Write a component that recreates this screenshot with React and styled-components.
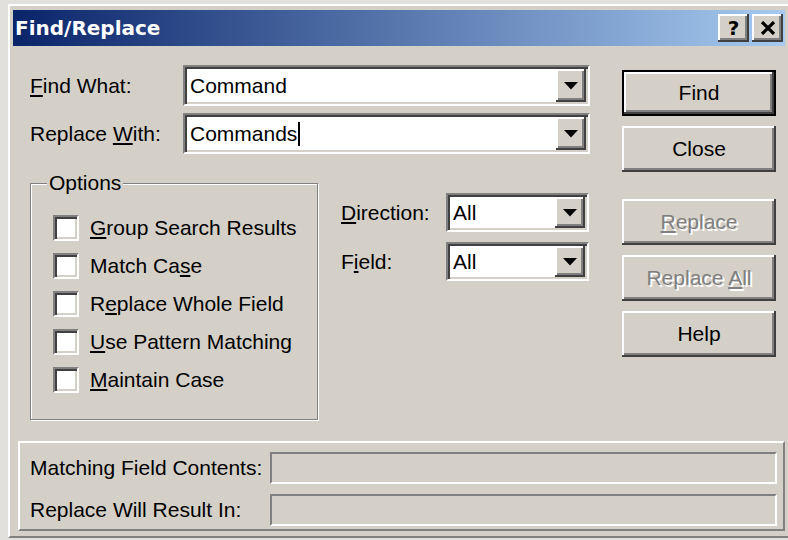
import React from "react";
import styled, { createGlobalStyle, css } from "styled-components";

const GlobalStyle = createGlobalStyle`
  html, body { margin: 0; padding: 0; }
  body {
    background: #e2e0dc;
    overflow: hidden;
    font-family: "Liberation Sans", Arial, sans-serif;
    font-size: 21px;
    color: #000;
  }
  u {
    text-decoration-thickness: 2px;
    text-underline-offset: 2px;
  }
`;

const raised = css`
  background: #d4d0c8;
  box-shadow: inset -2px -2px #404040, inset 2px 2px #fff, inset -4px -4px #808080;
`;

const sunken = css`
  border: 2px solid;
  border-color: #808080 #fff #fff #808080;
  box-shadow: inset 2px 2px #404040, inset -2px -2px #d4d0c8;
`;

const Screen = styled.div`
  width: 788px;
  height: 540px;
  overflow: hidden;
  padding: 4px 0 0 8px;
  box-sizing: border-box;
`;

const Window = styled.div`
  width: 782px;
  height: 534px;
  box-sizing: border-box;
  background: #d4d0c8;
  border-style: solid;
  border-width: 2px;
  border-color: #fff #808080 #808080 #fff;
  padding: 4px 3px 3px 3px;
  display: flex;
  flex-direction: column;
`;

const TitleBar = styled.div`
  flex: none;
  height: 36px;
  display: flex;
  align-items: center;
  padding: 0 2px;
  background: linear-gradient(90deg, #0a246a 0%, #a6caf0 100%);
`;

const Title = styled.div`
  flex: 1;
  font-family: "DejaVu Sans", Verdana, sans-serif;
  font-weight: bold;
  font-size: 20px;
  color: #fff;
`;

const CaptionButton = styled.div`
  ${raised};
  width: 31px;
  height: 28px;
  display: flex;
  align-items: center;
  justify-content: center;
  margin-left: ${(p) => (p.$gap ? 3 : 0)}px;
  font-family: "DejaVu Sans", Verdana, sans-serif;
  font-weight: bold;
  font-size: 20px;
  line-height: 1;
`;

const Body = styled.div`
  flex: 1;
  display: flex;
  flex-direction: column;
`;

const Upper = styled.div`
  flex: 1;
  display: flex;
`;

const LeftPane = styled.div`
  flex: 1;
  display: flex;
  flex-direction: column;
  padding: 19px 0 0 17px;
`;

const FieldStack = styled.div`
  display: flex;
  flex-direction: column;
  gap: ${(p) => p.$gap}px;
`;

const FieldRow = styled.div`
  display: flex;
  align-items: center;
`;

const FieldLabel = styled.div`
  width: ${(p) => p.$w}px;
  flex: none;
`;

const Combo = styled.div`
  ${sunken};
  width: ${(p) => p.$w}px;
  height: ${(p) => p.$h}px;
  box-sizing: border-box;
  background: #fff;
  padding: 2px;
  display: flex;
  align-items: stretch;
`;

const ComboText = styled.div`
  flex: 1;
  display: flex;
  align-items: center;
  padding-left: 3px;
`;

const Caret = styled.span`
  display: inline-block;
  width: 2px;
  height: 24px;
  margin-left: 1px;
  background: #000;
`;

const DropButton = styled.div`
  ${raised};
  width: 30px;
  flex: none;
  display: flex;
  align-items: center;
  justify-content: center;
`;

const OptionsArea = styled.div`
  display: flex;
  align-items: flex-start;
  margin-top: 29px;
`;

const GroupBox = styled.div`
  position: relative;
  width: 288px;
  height: 237px;
  box-sizing: border-box;
  border: 1px solid #808080;
  box-shadow: inset 1px 1px #fff, 1px 1px #fff;
  padding: 31px 0 0 22px;
  display: flex;
  flex-direction: column;
  gap: 12px;
`;

const GroupTitle = styled.div`
  position: absolute;
  top: -13px;
  left: 16px;
  padding: 0 2px;
  background: #d4d0c8;
`;

const CheckRow = styled.div`
  display: flex;
  align-items: center;
  height: 26px;
  gap: 11px;
`;

const CheckBox = styled.div`
  ${sunken};
  width: 26px;
  height: 26px;
  box-sizing: border-box;
  background: #fff;
`;

const SideFields = styled(FieldStack)`
  margin: 10px 0 0 23px;
`;

const ButtonColumn = styled.div`
  width: 154px;
  flex: none;
  display: flex;
  flex-direction: column;
  gap: 10px;
  padding-top: 24px;
  margin-right: 9px;
`;

const ButtonSpacer = styled.div`
  height: 7px;
`;

const PushButton = styled.div`
  ${raised};
  height: 46px;
  display: flex;
  align-items: center;
  justify-content: center;
  color: ${(p) => (p.$disabled ? "#808080" : "#000")};
  text-shadow: ${(p) => (p.$disabled ? "2px 2px 0 #fff" : "none")};
  ${(p) =>
    p.$default &&
    css`
      box-shadow: inset 0 0 0 2px #000, inset -4px -4px #404040,
        inset 4px 4px #fff, inset -6px -6px #808080;
    `}
`;

const StatusPanel = styled.div`
  height: 90px;
  box-sizing: border-box;
  margin: 0 0 2px 5px;
  border: 2px solid;
  border-color: #fff #808080 #808080 #fff;
  padding: 9px 6px 0 10px;
  display: flex;
  flex-direction: column;
  gap: 10px;
`;

const StatusRow = styled.div`
  display: flex;
  align-items: center;
  height: 32px;
`;

const StatusField = styled.div`
  flex: 1;
  height: 32px;
  box-sizing: border-box;
  border: 2px solid;
  border-color: #808080 #fff #fff #808080;
`;

const Arrow = () => (
  <svg width="14" height="8" viewBox="0 0 14 8">
    <polygon points="0,0 14,0 7,7.5" fill="#000" />
  </svg>
);

const CloseGlyph = () => (
  <svg width="16" height="14" viewBox="0 0 16 14">
    <path d="M2 1 L14 13 M14 1 L2 13" stroke="#000" strokeWidth="3.2" />
  </svg>
);

const ComboBox = ({ w, h, children }) => (
  <Combo $w={w} $h={h}>
    <ComboText>{children}</ComboText>
    <DropButton>
      <Arrow />
    </DropButton>
  </Combo>
);

const options = [
  ["", "G", "roup Search Results"],
  ["Match Ca", "s", "e"],
  ["R", "e", "place Whole Field"],
  ["", "U", "se Pattern Matching"],
  ["", "M", "aintain Case"],
];

export default function App() {
  return (
    <Screen>
      <GlobalStyle />
      <Window>
        <TitleBar>
          <Title>Find/Replace</Title>
          <CaptionButton>?</CaptionButton>
          <CaptionButton $gap>
            <CloseGlyph />
          </CaptionButton>
        </TitleBar>
        <Body>
          <Upper>
            <LeftPane>
              <FieldStack $gap={7}>
                <FieldRow>
                  <FieldLabel $w={153}>
                    <u>F</u>ind What:
                  </FieldLabel>
                  <ComboBox w={407} h={41}>
                    Command
                  </ComboBox>
                </FieldRow>
                <FieldRow>
                  <FieldLabel $w={153}>
                    Replace <u>W</u>ith:
                  </FieldLabel>
                  <ComboBox w={407} h={41}>
                    Commands
                    <Caret />
                  </ComboBox>
                </FieldRow>
              </FieldStack>
              <OptionsArea>
                <GroupBox>
                  <GroupTitle>Options</GroupTitle>
                  {options.map(([a, k, b]) => (
                    <CheckRow key={a + k + b}>
                      <CheckBox />
                      <span>
                        {a}
                        <u>{k}</u>
                        {b}
                      </span>
                    </CheckRow>
                  ))}
                </GroupBox>
                <SideFields $gap={10}>
                  <FieldRow>
                    <FieldLabel $w={105}>
                      <u>D</u>irection:
                    </FieldLabel>
                    <ComboBox w={143} h={39}>
                      All
                    </ComboBox>
                  </FieldRow>
                  <FieldRow>
                    <FieldLabel $w={105}>
                      F<u>i</u>eld:
                    </FieldLabel>
                    <ComboBox w={143} h={39}>
                      All
                    </ComboBox>
                  </FieldRow>
                </SideFields>
              </OptionsArea>
            </LeftPane>
            <ButtonColumn>
              <PushButton $default>Find</PushButton>
              <PushButton>Close</PushButton>
              <ButtonSpacer />
              <PushButton $disabled>
                <span>
                  <u>R</u>eplace
                </span>
              </PushButton>
              <PushButton $disabled>
                <span>
                  Replace <u>A</u>ll
                </span>
              </PushButton>
              <PushButton>Help</PushButton>
            </ButtonColumn>
          </Upper>
          <StatusPanel>
            <StatusRow>
              <FieldLabel $w={240}>Matching Field Contents:</FieldLabel>
              <StatusField />
            </StatusRow>
            <StatusRow>
              <FieldLabel $w={240}>Replace Will Result In:</FieldLabel>
              <StatusField />
            </StatusRow>
          </StatusPanel>
        </Body>
      </Window>
    </Screen>
  );
}
